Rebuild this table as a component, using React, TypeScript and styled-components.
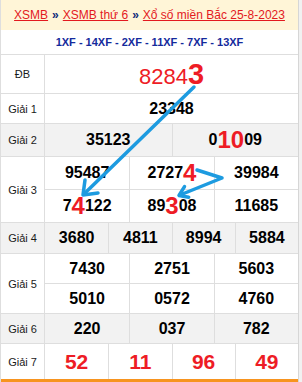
import styled, { createGlobalStyle } from 'styled-components';

const GlobalStyle = createGlobalStyle`
  html, body {
    margin: 0;
    padding: 0;
    background: #f1f1f1;
  }
  body {
    font-family: "Liberation Sans", Arial, sans-serif;
  }
`;

const Page = styled.div`
  position: relative;
  width: 299px;
  box-sizing: border-box;
  background: #fff;
  border-left: 1px solid #dedede;
  border-right: 1px solid #d6d6d6;
`;

const Crumbs = styled.div`
  height: 30px;
  background: #fff5d7;
  display: flex;
  align-items: center;
  justify-content: center;
  font-size: 12px;
`;

const CrumbLink = styled.a`
  color: #e3191e;
  text-decoration: underline;
`;

const Sep = styled.span`
  color: #0f2a7a;
  font-weight: bold;
  margin: 0 4px;
`;

const Codes = styled.div`
  height: 25px;
  box-sizing: border-box;
  border-bottom: 1px solid #dedede;
  display: flex;
  align-items: center;
  justify-content: center;
  color: #142a9c;
  font-size: 11px;
  font-weight: bold;
`;

const Row = styled.div<{ $h: number; $gray?: boolean; $last?: boolean }>`
  display: grid;
  grid-template-columns: 44px 1fr;
  height: ${p => p.$h}px;
  box-sizing: border-box;
  background: ${p => (p.$gray ? '#f2f2f2' : '#fff')};
  border-bottom: ${p => (p.$last ? '3px solid #f7941f' : '1px solid #dedede')};
`;

const Label = styled.div`
  display: flex;
  align-items: center;
  justify-content: center;
  border-right: 1px solid #dedede;
  font-size: 11px;
  color: #1a1a1a;
`;

const Values = styled.div`
  display: flex;
  flex-direction: column;
`;

const Line = styled.div<{ $cols: number }>`
  flex: 1;
  display: grid;
  grid-template-columns: repeat(${p => p.$cols}, 1fr);
  & + & {
    border-top: 1px solid #dedede;
  }
`;

const Cell = styled.div`
  display: flex;
  align-items: center;
  justify-content: center;
  font-size: 16px;
  font-weight: bold;
  color: #000;
  & + & {
    border-left: 1px solid #dedede;
  }
`;

const Hot = styled.span`
  color: #ee1c25;
  font-size: 24px;
  line-height: 1;
`;

const Special = styled.span`
  color: #ee1c25;
  font-size: 22px;
  font-weight: normal;
`;

const SpecialTail = styled.span`
  font-size: 29px;
  font-weight: bold;
`;

const Tail = styled.span`
  color: #ee1c25;
  font-size: 21px;
`;

const Arrows = styled.svg`
  position: absolute;
  left: -1px;
  top: 0;
  pointer-events: none;
`;

const blue = '#1d9be0';

export default function App() {
  return (
    <>
      <GlobalStyle />
      <Page>
        <Crumbs>
          <CrumbLink>XSMB</CrumbLink>
          <Sep>»</Sep>
          <CrumbLink>XSMB thứ 6</CrumbLink>
          <Sep>»</Sep>
          <CrumbLink>Xổ số miền Bắc 25-8-2023</CrumbLink>
        </Crumbs>
        <Codes>1XF - 14XF - 2XF - 11XF - 7XF - 13XF</Codes>

        <Row $h={39}>
          <Label>ĐB</Label>
          <Values>
            <Line $cols={1}>
              <Cell>
                <Special>
                  8284<SpecialTail>3</SpecialTail>
                </Special>
              </Cell>
            </Line>
          </Values>
        </Row>

        <Row $h={30}>
          <Label>Giải 1</Label>
          <Values>
            <Line $cols={1}>
              <Cell>23348</Cell>
            </Line>
          </Values>
        </Row>

        <Row $h={33} $gray>
          <Label>Giải 2</Label>
          <Values>
            <Line $cols={2}>
              <Cell>35123</Cell>
              <Cell>
                0<Hot>10</Hot>09
              </Cell>
            </Line>
          </Values>
        </Row>

        <Row $h={66}>
          <Label>Giải 3</Label>
          <Values>
            <Line $cols={3}>
              <Cell>95487</Cell>
              <Cell>
                2727<Hot>4</Hot>
              </Cell>
              <Cell>39984</Cell>
            </Line>
            <Line $cols={3}>
              <Cell>
                7<Hot>4</Hot>122
              </Cell>
              <Cell>
                89<Hot>3</Hot>08
              </Cell>
              <Cell>11685</Cell>
            </Line>
          </Values>
        </Row>

        <Row $h={31} $gray>
          <Label>Giải 4</Label>
          <Values>
            <Line $cols={4}>
              <Cell>3680</Cell>
              <Cell>4811</Cell>
              <Cell>8994</Cell>
              <Cell>5884</Cell>
            </Line>
          </Values>
        </Row>

        <Row $h={60}>
          <Label>Giải 5</Label>
          <Values>
            <Line $cols={3}>
              <Cell>7430</Cell>
              <Cell>2751</Cell>
              <Cell>5603</Cell>
            </Line>
            <Line $cols={3}>
              <Cell>5010</Cell>
              <Cell>0572</Cell>
              <Cell>4760</Cell>
            </Line>
          </Values>
        </Row>

        <Row $h={30} $gray>
          <Label>Giải 6</Label>
          <Values>
            <Line $cols={3}>
              <Cell>220</Cell>
              <Cell>037</Cell>
              <Cell>782</Cell>
            </Line>
          </Values>
        </Row>

        <Row $h={38} $last>
          <Label>Giải 7</Label>
          <Values>
            <Line $cols={4}>
              <Cell><Tail>52</Tail></Cell>
              <Cell><Tail>11</Tail></Cell>
              <Cell><Tail>96</Tail></Cell>
              <Cell><Tail>49</Tail></Cell>
            </Line>
          </Values>
        </Row>

        <Arrows width={302} height={382} viewBox="0 0 302 382">
          <g fill="none" stroke={blue} strokeWidth={3.5} strokeLinecap="round" strokeLinejoin="round">
            <line x1={194} y1={87} x2={84} y2={194} />
            <polyline points="85,180 83,195 98,193" />
            <polyline points="197,170 222,178 180,195" />
            <polyline points="184.5,186.6 179,195.5 188.7,197.3" />
          </g>
        </Arrows>
      </Page>
    </>
  );
}
